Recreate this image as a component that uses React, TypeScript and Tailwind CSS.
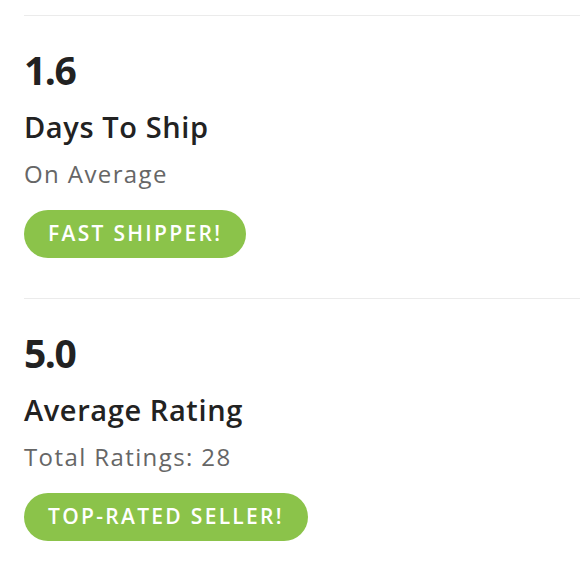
import React from 'react';

type Stat = {
  value: string;
  title: string;
  subtitle: string;
  badge: string;
};

const stats: Stat[] = [
  { value: '1.6', title: 'Days To Ship', subtitle: 'On Average', badge: 'FAST SHIPPER!' },
  { value: '5.0', title: 'Average Rating', subtitle: 'Total Ratings: 28', badge: 'TOP-RATED SELLER!' },
];

function StatBlock({ stat }: { stat: Stat }) {
  return (
    <div className="border-t border-[#ebebeb] pt-[34px] pb-[40px]">
      <div className="text-[39px] font-bold leading-[40px] tracking-[-1.5px] text-[#222]">
        {stat.value}
      </div>
      <div className="mt-[20px] text-[29px] font-semibold leading-[34px] tracking-[0.6px] text-[#222]">
        {stat.title}
      </div>
      <div className="mt-[15px] text-[24px] leading-[30px] tracking-[1.4px] text-[#666]">
        {stat.subtitle}
      </div>
      <div className="mt-[21px] flex">
        <span className="flex h-[48px] items-center rounded-full bg-[#8bc34a] pl-[24px] pr-[24px] text-[21px] font-semibold tracking-[2.3px] text-white">
          {stat.badge}
        </span>
      </div>
    </div>
  );
}

export default function App() {
  return (
    <div
      className="min-h-[580px] bg-white pl-[24px] pt-[15px]"
      style={{ fontFamily: '"Open Sans", sans-serif' }}
    >
      {stats.map((s) => (
        <StatBlock key={s.title} stat={s} />
      ))}
    </div>
  );
}
